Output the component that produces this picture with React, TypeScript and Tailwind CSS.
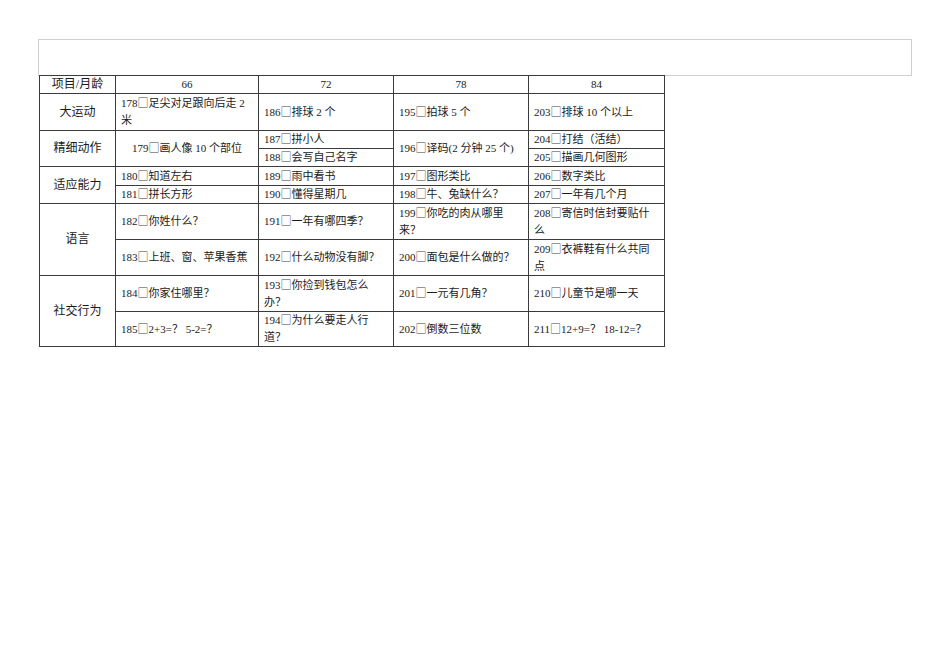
const font = { fontFamily: '"Liberation Serif", "Noto Sans CJK SC", serif' };

const td = 'border border-[#3a3a3a] px-[5px] align-middle leading-[17px]';
const tdc = td + ' text-center';

function Item({ n, children }: { n: number; children: React.ReactNode }) {
  return (
    <>
      {n}
      <span className="font-['Noto_Sans_CJK_SC',sans-serif] leading-none text-[#444]">□</span>
      {children}
    </>
  );
}

export default function App() {
  return (
    <div className="min-h-screen bg-white text-[11px] text-[#1a1a1a]" style={font}>
      <div className="pl-[38px] pt-[39px]">
        <div className="h-[37px] w-[874px] border border-[#cfcfcf]" />
        <table className="-mt-px ml-px w-[625px] table-fixed border-collapse">
          <colgroup>
            <col className="w-[76px]" />
            <col className="w-[143px]" />
            <col className="w-[135px]" />
            <col className="w-[135px]" />
            <col className="w-[136px]" />
          </colgroup>
          <tbody>
            <tr className="h-[18px]">
              <td className={tdc + ' text-[12px]'}>项目/月龄</td>
              <td className={tdc}>66</td>
              <td className={tdc}>72</td>
              <td className={tdc}>78</td>
              <td className={tdc}>84</td>
            </tr>
            <tr className="h-[37px]">
              <td className={tdc + ' text-[12px]'}>大运动</td>
              <td className={td}><Item n={178}>足尖对足跟向后走 2<br />米</Item></td>
              <td className={td}><Item n={186}>排球 2 个</Item></td>
              <td className={td}><Item n={195}>拍球 5 个</Item></td>
              <td className={td}><Item n={203}>排球 10 个以上</Item></td>
            </tr>
            <tr className="h-[18px]">
              <td rowSpan={2} className={tdc + ' text-[12px]'}>精细动作</td>
              <td rowSpan={2} className={tdc}><Item n={179}>画人像 10 个部位</Item></td>
              <td className={td}><Item n={187}>拼小人</Item></td>
              <td rowSpan={2} className={td}><Item n={196}>译码(2 分钟 25 个)</Item></td>
              <td className={td}><Item n={204}>打结（活结）</Item></td>
            </tr>
            <tr className="h-[18px]">
              <td className={td}><Item n={188}>会写自己名字</Item></td>
              <td className={td}><Item n={205}>描画几何图形</Item></td>
            </tr>
            <tr className="h-[19px]">
              <td rowSpan={2} className={tdc + ' text-[12px]'}>适应能力</td>
              <td className={td}><Item n={180}>知道左右</Item></td>
              <td className={td}><Item n={189}>雨中看书</Item></td>
              <td className={td}><Item n={197}>图形类比</Item></td>
              <td className={td}><Item n={206}>数字类比</Item></td>
            </tr>
            <tr className="h-[18px]">
              <td className={td}><Item n={181}>拼长方形</Item></td>
              <td className={td}><Item n={190}>懂得星期几</Item></td>
              <td className={td}><Item n={198}>牛、兔缺什么？</Item></td>
              <td className={td}><Item n={207}>一年有几个月</Item></td>
            </tr>
            <tr className="h-[36px]">
              <td rowSpan={2} className={tdc + ' text-[12px]'}>语言</td>
              <td className={td}><Item n={182}>你姓什么？</Item></td>
              <td className={td}><Item n={191}>一年有哪四季？</Item></td>
              <td className={td}><Item n={199}>你吃的肉从哪里<br />来？</Item></td>
              <td className={td}><Item n={208}>寄信时信封要贴什<br />么</Item></td>
            </tr>
            <tr className="h-[36px]">
              <td className={td}><Item n={183}>上班、窗、苹果香蕉</Item></td>
              <td className={td}><Item n={192}>什么动物没有脚？</Item></td>
              <td className={td}><Item n={200}>面包是什么做的？</Item></td>
              <td className={td}><Item n={209}>衣裤鞋有什么共同<br />点</Item></td>
            </tr>
            <tr className="h-[36px]">
              <td rowSpan={2} className={tdc + ' text-[12px]'}>社交行为</td>
              <td className={td}><Item n={184}>你家住哪里？</Item></td>
              <td className={td}><Item n={193}>你捡到钱包怎么<br />办？</Item></td>
              <td className={td}><Item n={201}>一元有几角？</Item></td>
              <td className={td}><Item n={210}>儿童节是哪一天</Item></td>
            </tr>
            <tr className="h-[35px]">
              <td className={td}><Item n={185}>2+3=？ 5-2=？</Item></td>
              <td className={td}><Item n={194}>为什么要走人行<br />道？</Item></td>
              <td className={td}><Item n={202}>倒数三位数</Item></td>
              <td className={td}><Item n={211}>12+9=？ 18-12=？</Item></td>
            </tr>
          </tbody>
        </table>
      </div>
    </div>
  );
}
